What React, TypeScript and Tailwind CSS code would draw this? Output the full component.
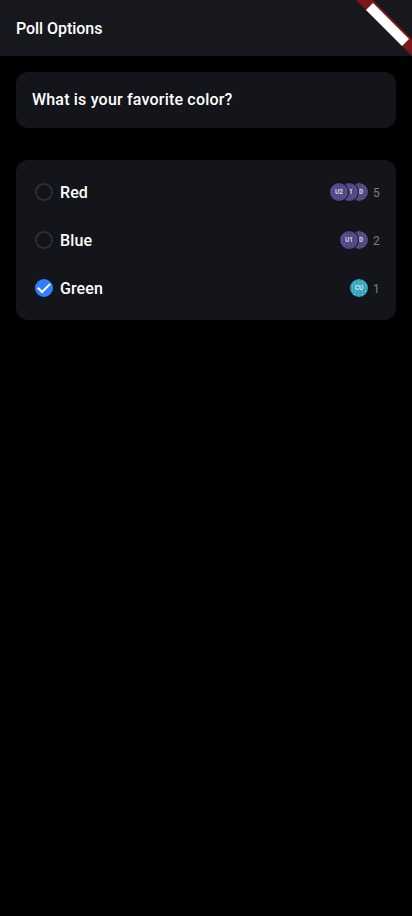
type AvatarData = { label: string; tone: "purple" | "teal"; shift?: number };
type Option = { name: string; votes: number; checked?: boolean; avatars: AvatarData[] };

const options: Option[] = [
  {
    name: "Red",
    votes: 5,
    avatars: [
      { label: "U2", tone: "purple" },
      { label: "1", tone: "purple", shift: 1.9 },
      { label: "D", tone: "purple", shift: 2.2 },
    ],
  },
  {
    name: "Blue",
    votes: 2,
    avatars: [
      { label: "U1", tone: "purple" },
      { label: "D", tone: "purple", shift: 2.2 },
    ],
  },
  { name: "Green", votes: 1, checked: true, avatars: [{ label: "CU", tone: "teal" }] },
];

function Avatar({ label, tone, shift = 0 }: AvatarData) {
  const purple = tone === "purple";
  const line = purple ? "#6b5c99" : "#6fcbdc";
  return (
    <svg viewBox="0 0 18 18" className="block size-[18px]">
      <circle cx="9" cy="9" r="9" fill={purple ? "#4f4784" : "#329fb8"} />
      <g stroke={line} strokeWidth="0.6" fill="none" opacity="0.8">
        <path d="M3 3.5H15M1 5.5H17M1 12.5H17M3 15.5H15" strokeDasharray="2.5 1" />
        <path d="M4.5 2V6M8.5 0.5V6M12.5 1V6M15.5 4V14M4.5 12V16M8.5 12V17.5M12.5 12V17M2.5 5V13" />
      </g>
      <text
        x={9 + shift}
        y="11.4"
        textAnchor="middle"
        fontSize="6.5"
        fontWeight="700"
        fontFamily="Roboto, sans-serif"
        fill={purple ? "#dedbea" : "#d7f2f7"}
      >
        {label}
      </text>
    </svg>
  );
}

function Radio({ checked }: { checked?: boolean }) {
  return (
    <svg viewBox="0 0 18 18" className="size-[18px] shrink-0">
      {checked ? (
        <>
          <circle cx="9" cy="9" r="9" fill="#337eff" />
          <path d="M2.8 8.8L7.1 13L15.2 4.9" fill="none" stroke="white" strokeWidth="2" />
        </>
      ) : (
        <circle cx="9" cy="9" r="8.1" fill="none" stroke="#2f2f31" strokeWidth="1.8" />
      )}
    </svg>
  );
}

function OptionRow({ name, votes, checked, avatars }: Option) {
  return (
    <div className="flex h-12 items-center pr-4 pl-[19px]">
      <Radio checked={checked} />
      <span className="ml-[7px] pt-0.5 text-base font-medium tracking-[0.1px]">{name}</span>
      <div className="ml-auto flex">
        {avatars.map((avatar, i) => (
          <div
            key={i}
            className="relative -ml-2 rounded-full shadow-[0_0_0_1px_#14151a]"
            style={{ zIndex: avatars.length - i }}
          >
            <Avatar {...avatar} />
          </div>
        ))}
      </div>
      <span className="ml-[5px] w-[7px] pt-0.5 text-xs text-[#7f7f81]">{votes}</span>
    </div>
  );
}

export default function App() {
  return (
    <div className="relative min-h-screen overflow-hidden bg-black font-[Roboto,sans-serif] text-white">
      <header className="flex h-14 items-center bg-[#17181d] px-4">
        <h1 className="pt-0.5 text-base font-medium tracking-[-0.05px]">Poll Options</h1>
      </header>
      <main className="flex flex-col gap-8 p-4">
        <section className="flex h-14 items-center rounded-xl bg-[#14151a] px-4">
          <h2 className="text-base font-medium tracking-[0.19px]">What is your favorite color?</h2>
        </section>
        <section className="rounded-xl bg-[#14151a] py-2">
          {options.map((option) => (
            <OptionRow key={option.name} {...option} />
          ))}
        </section>
      </main>
      <svg viewBox="0 0 56 56" className="absolute top-0 right-0 size-14">
        <path d="M0 0H17L56 39V56Z" fill="#7d171a" />
        <path d="M10 10L17 3L53 39L46 46Z" fill="white" />
      </svg>
    </div>
  );
}
